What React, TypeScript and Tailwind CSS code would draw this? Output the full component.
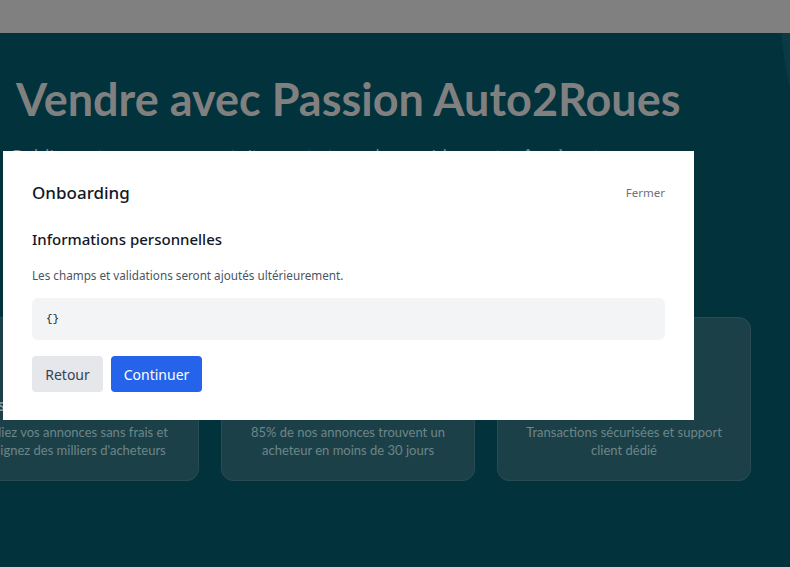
import { useState } from "react";

const features = [
  { title: "Frais de publication offerts", text: "Publiez vos annonces sans frais et atteignez des milliers d'acheteurs" },
  { title: "Vente rapide", text: "85% de nos annonces trouvent un acheteur en moins de 30 jours" },
  { title: "Sécurité garantie", text: "Transactions sécurisées et support client dédié" },
];

export default function App() {
  const [open, setOpen] = useState(true);
  const [data] = useState({});

  return (
    <div className="relative h-[567px] w-[790px] overflow-hidden bg-[#02323b] font-['Open_Sans',sans-serif]">
      <div className="relative z-10 h-[33px] bg-[#808080]" />

      <div className="pointer-events-none absolute left-[780px] top-[-400px] h-[800px] w-[800px] rounded-full bg-[#0a3b44]" />

      <section className="relative pl-[16px] pt-[40px]">
        <h1 className="font-['Lato',sans-serif] text-[45px] font-bold leading-[52px] text-[#808080]">
          Vendre avec Passion Auto2Roues
        </h1>
        <p className="-ml-[4px] mt-[17px] max-w-[680px] text-[18px] leading-[28px] text-[#7b8a8d]">
          Publiez votre annonce gratuitement et vendez rapidement grâce à notre communauté de passionnés
        </p>

        <div className="ml-[-71px] mt-[119px] grid w-[806px] grid-cols-3 gap-[22px]">
          {features.map((f) => (
            <div
              key={f.title}
              className="flex h-[164px] flex-col items-center rounded-xl border border-[#2a4b52] bg-[#1c4048] px-[20px] pt-[77px] text-center"
            >
              <div className="whitespace-nowrap text-[16px] font-semibold leading-[20px] text-[#8a9a9c]">{f.title}</div>
              <p className="mt-[8px] font-['Lato',sans-serif] text-[13px] leading-[18px] text-[#6d8689]">{f.text}</p>
            </div>
          ))}
        </div>
      </section>

      {open && (
        <div className="absolute left-[3px] top-[151px] z-20 w-[691px] bg-white px-[29px] pb-[28px] pt-[28px] font-['Noto_Sans',sans-serif]">
          <div className="flex items-center justify-between">
            <h2 className="text-[17px] font-medium leading-[28px] text-[#111827]">Onboarding</h2>
            <button onClick={() => setOpen(false)} className="text-[11.5px] text-[#6b7280]">
              Fermer
            </button>
          </div>
          <h3 className="mt-[20px] text-[15px] font-medium leading-[24px] text-[#111827]">
            Informations personnelles
          </h3>
          <p className="mt-[14px] text-[11.7px] leading-[20px] text-[#4b5563]">
            Les champs et validations seront ajoutés ultérieurement.
          </p>
          <pre className="mt-[13px] h-[42px] rounded-md bg-[#f3f4f6] px-[14px] py-[12px] font-['Liberation_Mono',monospace] text-[11px] leading-[18px] text-[#111827]">
            {JSON.stringify(data)}
          </pre>
          <div className="mt-[16px] flex gap-[8px]">
            <button className="h-[36px] w-[71px] rounded bg-[#e5e7eb] text-[14px] text-[#374151]">
              Retour
            </button>
            <button className="h-[36px] w-[91px] rounded bg-[#2563eb] text-[14px] text-white">
              Continuer
            </button>
          </div>
        </div>
      )}
    </div>
  );
}
